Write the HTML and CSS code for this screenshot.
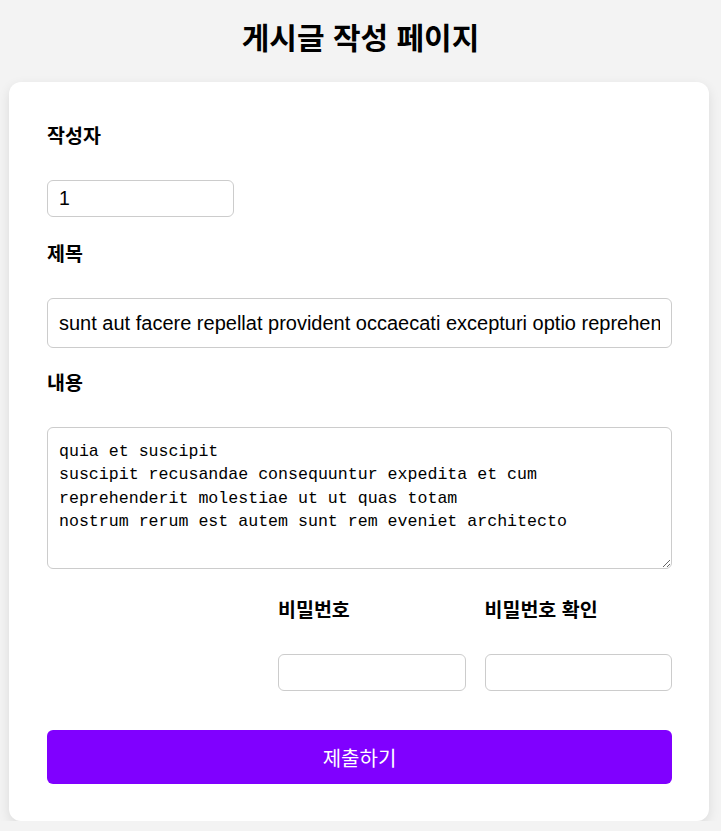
FILE: index.html
```html
<!DOCTYPE html>
<html lang="ko">
<head>
<meta charset="utf-8">
<title>게시글 작성 페이지</title>
<link rel="stylesheet" href="styles.css">
</head>
<body>
<h1 class="page-title">게시글 작성 페이지</h1>
<form class="card">
  <label class="label" for="author">작성자</label>
  <input class="input input-short" id="author" type="text" value="1">
  <label class="label" for="title">제목</label>
  <input class="input input-title" id="title" type="text" value="sunt aut facere repellat provident occaecati excepturi optio reprehenderit">
  <label class="label" for="content">내용</label>
  <textarea class="textarea" id="content">quia et suscipit
suscipit recusandae consequuntur expedita et cum
reprehenderit molestiae ut ut quas totam
nostrum rerum est autem sunt rem eveniet architecto</textarea>
  <div class="pw-row">
    <div class="pw-col">
      <label class="label" for="pw">비밀번호</label>
      <input class="input" id="pw" type="password">
    </div>
    <div class="pw-col">
      <label class="label" for="pw2">비밀번호 확인</label>
      <input class="input" id="pw2" type="password">
    </div>
  </div>
  <button class="submit" type="button">제출하기</button>
</form>
</body>
</html>
```
FILE: styles.css
```css
* { box-sizing: border-box; }
body {
  margin: 0;
  padding: 0 9px;
  background: #f3f3f3;
  font-family: "Noto Sans CJK KR", "Liberation Sans", sans-serif;
  color: #000;
}
.page-title {
  margin: 0;
  padding: 16px 0 0;
  height: 82px;
  line-height: 40px;
  font-size: 30px;
  font-weight: 700;
  text-align: center;
}
.card {
  width: 700px;
  background: #fff;
  border-radius: 12px;
  box-shadow: 0 4px 12px rgba(0, 0, 0, 0.1);
  padding: 41px 37px 37px 38px;
  display: flex;
  flex-direction: column;
}
.label {
  display: block;
  font-size: 19.5px;
  font-weight: 700;
  line-height: 24px;
  margin: 0 0 33px;
}
.input {
  font-family: "Liberation Sans", Arial, sans-serif;
  border: 1px solid #ccc;
  border-radius: 6px;
  height: 37px;
  padding: 0 11px;
  font-size: 19.5px;
  color: #000;
  background: #fff;
  outline: none;
}
.input-short { width: 187px; margin-bottom: 24px; }
.input-title {
  width: 100%;
  height: 50px;
  font-size: 20px;
  margin-bottom: 22px;
}
.textarea {
  width: 100%;
  height: 142px;
  border: 1px solid #ccc;
  border-radius: 6px;
  padding: 12px 11px 9px;
  font-family: "Liberation Mono", monospace;
  font-size: 16.6px;
  line-height: 23.3px;
  color: #000;
  resize: vertical;
  outline: none;
  margin-bottom: 28px;
}
.pw-row {
  display: flex;
  justify-content: flex-end;
  gap: 19px;
  margin-bottom: 39px;
}
.pw-col {
  width: 187.5px;
  display: flex;
  flex-direction: column;
}
.pw-col .input { width: 100%; }
.submit {
  height: 54px;
  border: none;
  border-radius: 6px;
  background: #8000ff;
  color: #fff;
  font-family: "Noto Sans CJK KR", sans-serif;
  font-size: 20px;
  cursor: pointer;
}
```
